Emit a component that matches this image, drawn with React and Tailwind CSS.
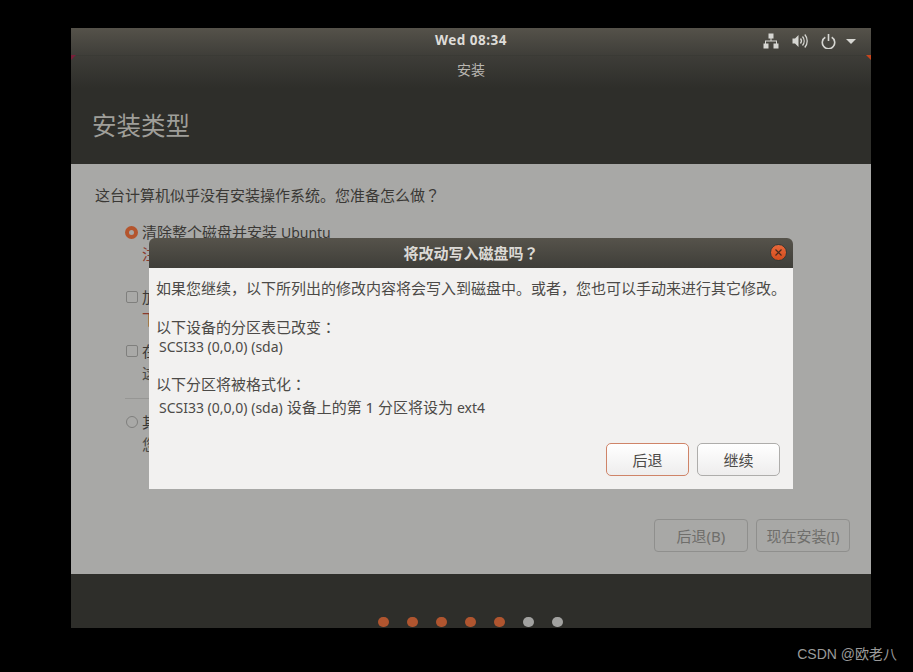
const font = { fontFamily: '"Noto Sans","Noto Sans CJK SC",sans-serif' };

function P({ c }) {
  return <span className="font-['Noto_Sans_CJK_TC']">{c}</span>;
}
function Net() {
  return (
    <svg width="16" height="16" viewBox="0 0 16 16" fill="#d6d6d2" className="block">
      <rect x="5.5" y="0.5" width="5" height="5" />
      <rect x="0.5" y="10.5" width="5" height="5" />
      <rect x="10.5" y="10.5" width="5" height="5" />
      <path d="M7.5 5h1v2.5h5.5V11h-1V8.5H3V11H2V7.500h5.500z" />
    </svg>
  );
}
function Vol() {
  return (
    <svg width="16" height="16" viewBox="0 0 16 16" fill="none" stroke="#d6d6d2" className="block">
      <path d="M0.500 5.500h2.500L6.500 2v12L3 10.500H0.500z" fill="#d6d6d2" stroke="none" />
      <path d="M8.500 5.500a4 4 0 0 1 0 5" strokeWidth="1.300" />
      <path d="M10.500 3.500a7 7 0 0 1 0 9" strokeWidth="1.300" />
      <path d="M12.800 1.500a10 10 0 0 1 0 13" strokeWidth="1.300" />
    </svg>
  );
}
function Power() {
  return (
    <svg width="15" height="15" viewBox="0 0 15 15" fill="none" stroke="#d6d6d2" strokeWidth="1.600" className="block">
      <path d="M4.300 3.200a6.200 6.200 0 1 0 6.400 0" />
      <path d="M7.500 0v7" />
    </svg>
  );
}
function Radio({ on }) {
  return on ? (
    <span className="w-[13px] h-[13px] rounded-full bg-[#b4552d] flex items-center justify-center shrink-0">
      <span className="w-[5px] h-[5px] rounded-full bg-[#a7a7a5]" />
    </span>
  ) : (
    <span className="w-[12px] h-[12px] rounded-full border border-[#7f7f7d] bg-[#a9a9a7] shrink-0" />
  );
}
function Check() {
  return <span className="w-[12px] h-[12px] rounded-[2px] border border-[#7f7f7d] bg-[#a9a9a7] shrink-0" />;
}
function Option({ mark, title, desc, red, h }) {
  return (
    <div className={`flex flex-col ${h}`}>
      <div className="flex items-center gap-[4px] h-[22px]">
        <span className="w-[13px] flex justify-center">{mark}</span>
        <span className="text-[15px] leading-[22px] whitespace-nowrap text-[#3a3835]">{title}</span>
      </div>
      <div className={`pl-[17px] text-[15px] leading-[22px] whitespace-nowrap ${red ? 'text-[#8a3a2c]' : 'text-[#4a4845]'}`}>{desc}</div>
    </div>
  );
}
function Step({ on }) {
  return <span className={`w-[11px] h-[10px] rounded-[5px] ${on ? 'bg-[#b0552f]' : 'bg-[#a2a2a0]'}`} />;
}

export default function App() {
  return (
    <div style={font} className="w-[913px] h-[672px] bg-black relative overflow-hidden [text-spacing-trim:space-all]">
      <div className="absolute left-[71px] top-[28px] w-[800px] h-[600px] flex flex-col">
        <div className="h-[28px] shrink-0 bg-gradient-to-b from-[#55524a] to-[#3f3e39] border-b border-[#3a3a35] relative flex items-center justify-center">
          <span className="text-[13.500px] font-bold tracking-[0.5px] text-[#dedcd8] relative top-[-1px]">Wed 08:34</span>
          <div className="absolute left-[692px] top-[5px] flex items-center">
            <Net />
            <span className="ml-[13px]"><Vol /></span>
            <span className="ml-[13px]"><Power /></span>
            <span className="ml-[10px] w-0 h-0 border-l-[5px] border-r-[5px] border-t-[5px] border-l-transparent border-r-transparent border-t-[#d6d6d2]" />
          </div>
          <span className="absolute left-0 bottom-[-5px] w-0 h-0 border-t-[5px] border-r-[5px] border-t-[#7a1f3a] border-r-transparent" />
          <span className="absolute right-0 bottom-[-5px] w-0 h-0 border-t-[5px] border-l-[5px] border-t-[#c8451c] border-l-transparent" />
        </div>
        <div className="h-[108px] shrink-0 bg-gradient-to-b from-[#3e3d38] via-[#2e2e2a] via-[30%] to-[#2e2e2a] flex flex-col">
          <div className="h-[27px] flex items-center justify-center text-[14px] text-[#b9b7b2]">安装</div>
          <div className="pl-[21px] mt-[25px] text-[24.500px] leading-[36px] text-[#9f9e99]">安装类型</div>
        </div>
        <div className="flex-1 bg-[#a8a8a6] flex flex-col pl-[24px] pr-[21px]">
          <div className="mt-[20px] text-[15px] leading-[22px] text-[#3a3835]">这台计算机似乎没有安装操作系统。您准备怎么做<P c="？" /></div>
          <div className="mt-[15px] pl-[30px] flex flex-col">
            <Option h="h-[65px]" mark={<Radio on />} title={<>清除整个磁盘并安装 <span className="text-[14px]">Ubuntu</span></>} desc="注意：这会删除所有系统里面的全部文件。" red />
            <Option h="h-[54px]" mark={<Check />} title="加密 Ubuntu 新安装以提高安全性" desc="下一步您将选择一个安全密钥。" red />
            <Option h="h-[58px]" mark={<Check />} title="在此新 Ubuntu 安装中使用 LVM" desc="这会设置逻辑卷管理。" />
            <div className="h-px w-[40px] bg-[#969694] mb-[12px]" />
            <Option h="h-[55px]" mark={<Radio />} title="其他选项" desc="您可以自己创建、调整分区。" />
          </div>
          <div className="flex justify-end gap-[8px] mt-[53px]">
            <div className="w-[94px] h-[33px] pt-[1px] rounded-[4px] border border-[#8f8f8d] flex items-center justify-center text-[15px] text-[#6f6e6b]">后退(B)</div>
            <div className="w-[94px] h-[33px] pt-[1px] rounded-[4px] border border-[#8f8f8d] flex items-center justify-center text-[15px] text-[#6f6e6b]"><span>现在安装<span className="text-[14px]">(I)</span></span></div>
          </div>
        </div>
        <div className="h-[54px] shrink-0 bg-[#2e2e2a] flex items-end justify-center gap-[18px] pr-[2px] pb-[1px]">
          <Step on /><Step on /><Step on /><Step on /><Step on /><Step /><Step />
        </div>
      </div>

      <div className="absolute left-[149px] top-[238px] w-[644px] h-[251px] flex flex-col">
        <div className="h-[30px] shrink-0 rounded-t-[6px] bg-gradient-to-b from-[#56534b] to-[#3f3e39] relative flex items-center justify-center">
          <span className="text-[15px] font-bold text-[#dcdad6]">将改动写入磁盘吗<P c="？" /></span>
          <span className="absolute right-[6px] top-[6px] w-[17px] h-[17px] rounded-full bg-gradient-to-b from-[#e8683a] to-[#d44c1c] border border-[#3a3a35] flex items-center justify-center">
            <svg width="7" height="7" viewBox="0 0 7 7" stroke="#4a2a1c" strokeWidth="1.200"><path d="M0.500 0.500l6 6M6.500 0.500l-6 6" /></svg>
          </span>
        </div>
        <div className="flex-1 bg-[#f2f1f0] flex flex-col text-[#4c4a47]">
          <div className="flex-1 pl-[7px]">
            <div className="mt-[9px] text-[15px] leading-[22px] whitespace-nowrap">如果您继续，以下所列出的修改内容将会写入到磁盘中。或者，您也可以手动来进行其它修改。</div>
            <div className="mt-[18px] text-[15px] leading-[20px]">以下设备的分区表已改变<P c="：" /></div>
            <div className="pl-[3px] text-[14px] leading-[20px]">SCSI33 (0,0,0) (sda)</div>
            <div className="mt-[17px] text-[15px] leading-[20px]">以下分区将被格式化<P c="：" /></div>
            <div className="mt-[3px] pl-[3px] text-[15px] leading-[20px] whitespace-nowrap"><span className="text-[14px]">SCSI33 (0,0,0) (sda)</span> 设备上的第 1 分区将设为 <span className="text-[14px]">ext4</span></div>
          </div>
          <div className="flex justify-end gap-[8px] pr-[13px] pb-[13px]">
            <div className="w-[83px] h-[33px] pt-[1px] rounded-[5px] border border-[#cf8468] bg-gradient-to-b from-[#ffffff] to-[#eeeded] flex items-center justify-center text-[15px]">后退</div>
            <div className="w-[83px] h-[33px] pt-[1px] rounded-[5px] border border-[#aeadab] bg-gradient-to-b from-[#ffffff] to-[#eeeded] flex items-center justify-center text-[15px]">继续</div>
          </div>
        </div>
      </div>

      <div className="absolute right-[16px] top-[645px] text-[14px] leading-[18px] text-[#9a9a9a] whitespace-nowrap" style={{ fontFamily: '"Liberation Sans","Noto Sans CJK SC",sans-serif' }}>CSDN @欧老八</div>
    </div>
  );
}
